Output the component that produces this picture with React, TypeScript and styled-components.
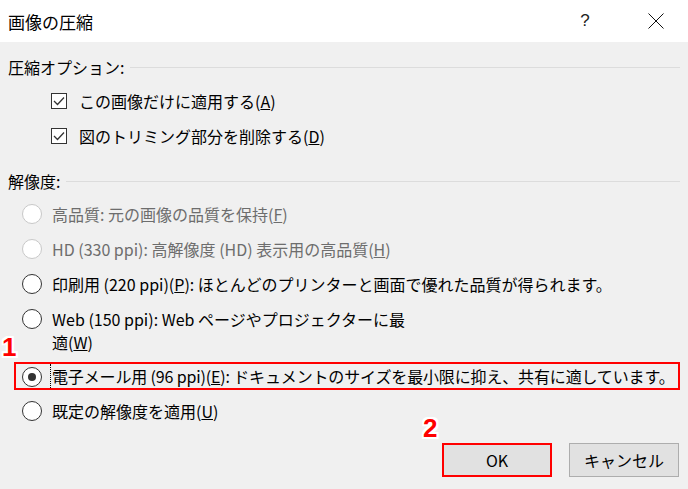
import React from 'react';
import styled, { createGlobalStyle } from 'styled-components';

const GlobalStyle = createGlobalStyle`
    html, body {
        margin: 0;
        padding: 0;
        background: #f0f0f0;
    }
    body {
        font-family: "Noto Sans CJK JP", "Liberation Sans", sans-serif;
        color: #000;
    }
`;

const Dialog = styled.div`
    width: 688px;
    height: 489px;
    background: #f0f0f0;
    display: flex;
    flex-direction: column;
    overflow: hidden;

    & > * {
        flex: none;
    }
`;

const TitleBar = styled.header`
    height: 42px;
    background: #fff;
    display: flex;
    align-items: center;
    padding-left: 8px;
    box-sizing: border-box;
`;

const Title = styled.h1`
    margin: 0;
    font-size: 17px;
    font-weight: 400;
    flex: 1;
`;

const HelpButton = styled.span`
    font-size: 17px;
    color: #222;
    width: 20px;
    text-align: center;
    margin-right: 53px;
    font-family: "Liberation Sans", sans-serif;
`;

const CloseButton = styled.span`
    display: flex;
    width: 16px;
    height: 16px;
    margin-right: 24px;
`;

const Body = styled.main`
    display: flex;
    flex-direction: column;
    padding: 0 8px;
`;

const GroupHeader = styled.div<{ $top: number }>`
    display: flex;
    align-items: center;
    height: 22px;
    margin-top: ${p => p.$top}px;
    font-size: 16px;
    line-height: 22px;

    &::after {
        content: '';
        flex: 1;
        height: 1px;
        background: #dcdcdc;
        margin-left: 6px;
    }
`;

const OptionList = styled.div`
    display: flex;
    flex-direction: column;
    margin-top: 5px;
`;

const CheckRow = styled.label`
    display: flex;
    align-items: center;
    height: 35px;
    padding-left: 43px;
    gap: 12px;
    font-size: 16px;
`;

const CheckBox = styled.span`
    width: 16px;
    height: 16px;
    box-sizing: border-box;
    border: 1px solid #333;
    background: #fff;
    display: flex;
    align-items: center;
    justify-content: center;
`;

const RadioRow = styled.label<{ $highlight?: boolean; $disabled?: boolean; $gap?: number }>`
    position: relative;
    display: flex;
    align-items: flex-start;
    gap: 10px;
    font-size: 16px;
    line-height: 23px;
    margin-top: ${p => p.$gap ?? 0}px;
    color: ${p => (p.$disabled ? '#6d6d6d' : '#000')};
    ${p =>
        p.$highlight
            ? `
        height: 28px;
        box-sizing: border-box;
        border: 2px solid #f00;
        margin-left: 6px;
        padding-left: 6px;
        align-items: center;
    `
            : `
        padding: 6px 0 6px 14px;
    `}
`;

const Radio = styled.span<{ $checked?: boolean; $disabled?: boolean }>`
    flex: none;
    width: 20px;
    height: 20px;
    margin-top: 1px;
    box-sizing: border-box;
    border-radius: 50%;
    border: 1px solid ${p => (p.$disabled ? '#c8c8c8' : '#333')};
    background: #fff;
    display: flex;
    align-items: center;
    justify-content: center;

    &::after {
        content: '';
        width: 8px;
        height: 8px;
        border-radius: 50%;
        background: ${p => (p.$checked ? '#333' : 'transparent')};
    }
`;

const RadioText = styled.span<{ $focused?: boolean }>`
    white-space: pre;
    ${p =>
        p.$focused
            ? `
        border-left: 1px dotted #000;
        margin-left: -2px;
        padding-left: 1px;
        line-height: 24px;
        letter-spacing: -0.15px;
    `
            : ''}
`;

const Marker = styled.span<{ $left: number; $top: number }>`
    position: absolute;
    left: ${p => p.$left}px;
    top: ${p => p.$top}px;
    font-family: "Liberation Sans", sans-serif;
    font-weight: 700;
    font-size: 26px;
    line-height: 26px;
    color: #f00;
    text-shadow: -2px 0 #fff, 2px 0 #fff, 0 -2px #fff, 0 2px #fff,
        -2px -2px #fff, 2px 2px #fff, -2px 2px #fff, 2px -2px #fff;
`;

const ButtonBar = styled.footer`
    display: flex;
    justify-content: flex-end;
    gap: 17px;
    margin-top: 14px;
    padding-right: 1px;
`;

const Button = styled.button<{ $highlight?: boolean }>`
    position: relative;
    width: 110px;
    height: 34px;
    box-sizing: border-box;
    background: #e1e1e1;
    border: ${p => (p.$highlight ? '2px solid #f00' : '1px solid #adadad')};
    font-family: "Noto Sans CJK JP", "Liberation Sans", sans-serif;
    font-size: 16px;
    color: #000;
    padding: 0;
`;

const Check = () => (
    <svg width="12" height="10" viewBox="0 0 12 10">
        <path d="M1 5 L4.5 8.5 L11 1.5" fill="none" stroke="#333" strokeWidth="1.3" />
    </svg>
);

const CloseIcon = () => (
    <svg width="16" height="16" viewBox="0 0 16 16">
        <path d="M0.5 0.5 L15.5 15.5 M15.5 0.5 L0.5 15.5" stroke="#111" strokeWidth="1" />
    </svg>
);

export default function App() {
    return (
        <>
            <GlobalStyle />
            <Dialog>
                <TitleBar>
                    <Title>画像の圧縮</Title>
                    <HelpButton>?</HelpButton>
                    <CloseButton>
                        <CloseIcon />
                    </CloseButton>
                </TitleBar>
                <Body>
                    <GroupHeader $top={14}>圧縮オプション:</GroupHeader>
                    <OptionList>
                        <CheckRow>
                            <CheckBox>
                                <Check />
                            </CheckBox>
                            <span>
                                この画像だけに適用する(<u>A</u>)
                            </span>
                        </CheckRow>
                        <CheckRow>
                            <CheckBox>
                                <Check />
                            </CheckBox>
                            <span>
                                図のトリミング部分を削除する(<u>D</u>)
                            </span>
                        </CheckRow>
                    </OptionList>

                    <GroupHeader $top={17}>解像度:</GroupHeader>
                    <OptionList>
                        <RadioRow $disabled>
                            <Radio $disabled />
                            <RadioText>
                                高品質: 元の画像の品質を保持(<u>F</u>)
                            </RadioText>
                        </RadioRow>
                        <RadioRow $disabled>
                            <Radio $disabled />
                            <RadioText>
                                HD (330 ppi): 高解像度 (HD) 表示用の高品質(<u>H</u>)
                            </RadioText>
                        </RadioRow>
                        <RadioRow>
                            <Radio />
                            <RadioText>
                                印刷用 (220 ppi)(<u>P</u>): ほとんどのプリンターと画面で優れた品質が得られます。
                            </RadioText>
                        </RadioRow>
                        <RadioRow>
                            <Radio />
                            <RadioText>
                                Web (150 ppi): Web ページやプロジェクターに最{'\n'}適(<u>W</u>)
                            </RadioText>
                        </RadioRow>
                        <RadioRow $highlight $gap={2}>
                            <Marker $left={-14} $top={-30}>1</Marker>
                            <Radio $checked />
                            <RadioText $focused>
                                電子メール用 (96 ppi)(<u>E</u>): ドキュメントのサイズを最小限に抑え、共有に適しています。
                            </RadioText>
                        </RadioRow>
                        <RadioRow $gap={4}>
                            <Radio />
                            <RadioText>
                                既定の解像度を適用(<u>U</u>)
                            </RadioText>
                        </RadioRow>
                    </OptionList>

                    <ButtonBar>
                        <Button $highlight>
                            <Marker $left={-21} $top={-30}>2</Marker>
                            OK
                        </Button>
                        <Button>キャンセル</Button>
                    </ButtonBar>
                </Body>
            </Dialog>
        </>
    );
}
